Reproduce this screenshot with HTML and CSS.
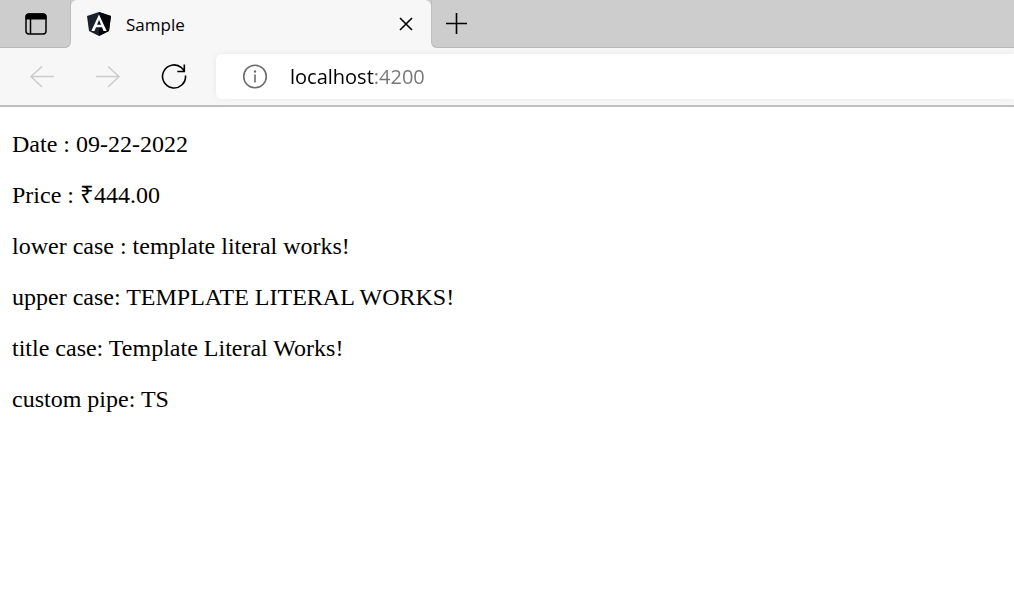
FILE: index.html
```html
<!DOCTYPE html>
<html lang="en">
<head>
<meta charset="utf-8">
<title>Sample</title>
<link rel="stylesheet" href="styles.css">
</head>
<body>
<header class="browser">
  <div class="tabstrip">
    <div class="strip strip-start">
      <button class="icon-button" type="button" aria-label="Tab actions menu">
        <svg width="22" height="22" viewBox="0 0 22 22" fill="none" stroke="#000" stroke-width="1.5">
          <rect x="1" y="1" width="20" height="20" rx="3"/>
          <path d="M5.500 6v15"/>
          <path d="M.5 6.500V4A3.500 3.500 0 0 1 4 .5h14A3.500 3.500 0 0 1 21.500 4v2.500z" fill="#000" stroke="none"/>
        </svg>
      </button>
    </div>
    <div class="tab-slot">
      <div class="tab">
        <svg class="favicon" width="26" height="26" viewBox="0 0 26 26">
          <path d="M13 1 1 5l2 15 10 5 10-5 2-15z" fill="#1c222c"/>
          <path d="M13 1v24l10-5 2-15z" fill="#05070d"/>
          <path fill="#fff" fill-rule="evenodd" d="M13 3.500 5.300 20h3.200l1.500-3.700h6l1.500 3.700h3.200zM13 8.800l2 4.900h-4z"/>
        </svg>
        <span class="tab-title">Sample</span>
        <button class="icon-button" type="button" aria-label="Close tab">
          <svg width="14" height="14" viewBox="0 0 14 14" fill="none" stroke="#000" stroke-width="1.600"><path d="M1 1l12 12M13 1 1 13"/></svg>
        </button>
      </div>
    </div>
    <div class="strip strip-end">
      <button class="icon-button" type="button" aria-label="New tab">
        <svg width="22" height="22" viewBox="0 0 22 22" fill="none" stroke="#000" stroke-width="1.600"><path d="M10.500 0v21M0 10.500h21"/></svg>
      </button>
    </div>
  </div>
  <div class="toolbar">
    <nav class="nav-buttons">
      <button class="icon-button" type="button" aria-label="Back" disabled>
        <svg width="26" height="22" viewBox="0 0 26 22" fill="none" stroke="#ccc" stroke-width="1.500"><path d="M25 10.500H2M13 .5 2 10.500l11 10.500"/></svg>
      </button>
      <button class="icon-button" type="button" aria-label="Forward" disabled>
        <svg width="26" height="22" viewBox="0 0 26 22" fill="none" stroke="#ccc" stroke-width="1.500"><path d="M1 10.500h23M13 .5l11 10L13 21"/></svg>
      </button>
      <button class="icon-button" type="button" aria-label="Refresh">
        <svg width="26" height="26" viewBox="0 0 26 26" fill="none" stroke="#000" stroke-width="1.600"><path d="M24.500 11.500A11.500 11.500 0 1 1 20.500 3.700L23.300 6.800M23.300.5v7H16.300"/></svg>
      </button>
    </nav>
    <div class="address">
      <button class="icon-button" type="button" aria-label="View site information">
        <svg width="26" height="26" viewBox="0 0 26 26" fill="none" stroke="#6b6b6b" stroke-width="1.600"><circle cx="13" cy="12.500" r="11.300"/><path d="M13 10.500v8"/><circle cx="13" cy="7.500" r="1.200" fill="#6b6b6b" stroke="none"/></svg>
      </button>
      <input class="url" type="text" aria-label="Address" value="localhost:4200" spellcheck="false">
    </div>
  </div>
</header>
<main class="page">
  <p>Date : 09-22-2022</p>
  <p>Price : ₹444.00</p>
  <p>lower case : template literal works!</p>
  <p>upper case: TEMPLATE LITERAL WORKS!</p>
  <p>title case: Template Literal Works!</p>
  <p>custom pipe: TS</p>
</main>
</body>
</html>
```

FILE: styles.css
```css
* { box-sizing: border-box; }

body {
  margin: 0;
  background: #fff;
  color: #000;
}

svg { display: block; }

.browser {
  background: #f7f7f7;
  border-bottom: 2px solid #bebebe;
  font-family: "Open Sans", "Noto Sans", sans-serif;
}

.icon-button {
  flex: none;
  padding: 0;
  border: 0;
  background: none;
}

.tabstrip {
  display: flex;
  height: 48px;
}

.strip {
  display: flex;
  align-items: center;
  background: #cdcdcd;
  border-bottom: 1px solid #b8b8b8;
}

.strip-start {
  width: 71px;
  padding-left: 25px;
  border-right: 1px solid #bfbfbf;
  border-bottom-right-radius: 6px;
}

.strip-end {
  flex: 1;
  padding-left: 14px;
  border-left: 1px solid #bfbfbf;
  border-bottom-left-radius: 6px;
}

.tab-slot {
  width: 360px;
  background: linear-gradient(#cdcdcd 50%, #f7f7f7 50%);
}

.tab {
  display: flex;
  align-items: center;
  height: 100%;
  padding: 0 18px 0 15px;
  border-radius: 6px 6px 0 0;
  background: #f7f7f7;
}

.tab-title {
  flex: 1;
  padding-left: 14px;
  font-size: 17px;
}

.toolbar {
  display: flex;
  align-items: center;
  height: 57px;
}

.nav-buttons {
  display: flex;
  align-items: center;
  gap: 40px;
  padding: 0 29px;
}

.address {
  display: flex;
  flex: 1;
  align-items: center;
  gap: 22px;
  height: 45px;
  padding-left: 26px;
  border-radius: 6px 0 0 6px;
  background: #fff;
  box-shadow: 0 0 6px #e9e9e9;
}

/* The host is black and the port grey, painted through the text. */
.url {
  flex: 1;
  min-width: 0;
  padding: 0;
  border: 0;
  outline: 0;
  background: linear-gradient(90deg, #000 84px, #767676 84px);
  background-clip: text;
  -webkit-background-clip: text;
  color: transparent;
  caret-color: #000;
  font-family: inherit;
  font-size: 20px;
}

.page {
  padding: 0 12px;
  font-family: "Liberation Serif", "Times New Roman", serif;
  font-size: 24px;
  line-height: 27px;
}

.page p { margin: 24px 0; }
```
